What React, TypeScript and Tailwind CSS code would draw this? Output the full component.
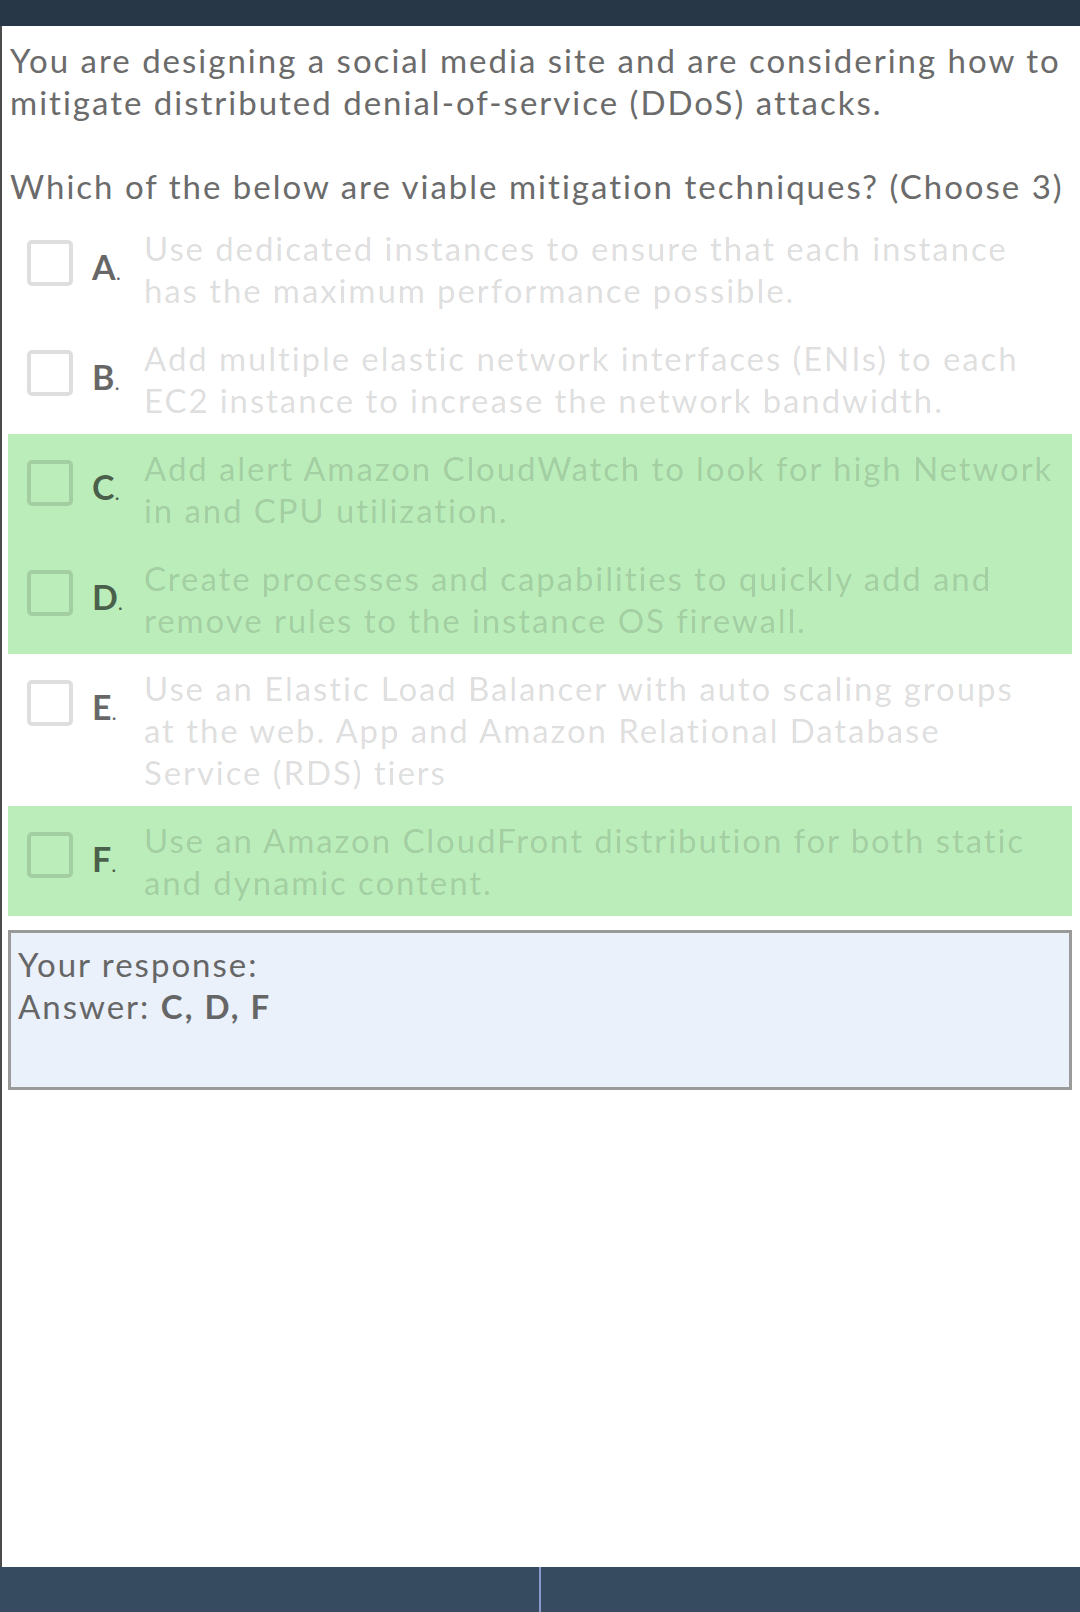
import React from 'react';

interface Option {
  letter: string;
  lines: string[];
  correct: boolean;
}

const options: Option[] = [
  { letter: 'A', lines: ['Use dedicated instances to ensure that each instance', 'has the maximum performance possible.'], correct: false },
  { letter: 'B', lines: ['Add multiple elastic network interfaces (ENIs) to each', 'EC2 instance to increase the network bandwidth.'], correct: false },
  { letter: 'C', lines: ['Add alert Amazon CloudWatch to look for high Network', 'in and CPU utilization.'], correct: true },
  { letter: 'D', lines: ['Create processes and capabilities to quickly add and', 'remove rules to the instance OS firewall.'], correct: true },
  {
    letter: 'E',
    lines: ['Use an Elastic Load Balancer with auto scaling groups', 'at the web. App and Amazon Relational Database', 'Service (RDS) tiers'],
    correct: false,
  },
  { letter: 'F', lines: ['Use an Amazon CloudFront distribution for both static', 'and dynamic content.'], correct: true },
];

const OptionRow: React.FC<{ option: Option }> = ({ option }) => (
  <div className="flex items-start py-[13px]">
    <div className="flex items-center mt-[13px] shrink-0">
      <div className="ml-[19px] w-[46px] h-[46px] rounded-[5px] border-[4px] border-black/[0.13]"></div>
      <div className="ml-[19px] w-[52px] text-[34px] leading-none font-bold text-black/60 pt-[8px]">
        {option.letter}
        <span className="text-[22px] font-normal">.</span>
      </div>
    </div>
    <div className="flex-1 text-[33px] leading-[42px] tracking-[1.9px] text-black/[0.15] whitespace-nowrap">
      {option.lines.map((l) => (
        <div key={l}>{l}</div>
      ))}
    </div>
  </div>
);

const App: React.FC = () => {
  const rows: React.ReactNode[] = [];
  let i = 0;
  while (i < options.length) {
    if (options[i].correct) {
      const group: Option[] = [];
      while (i < options.length && options[i].correct) {
        group.push(options[i]);
        i++;
      }
      rows.push(
        <div key={group[0].letter} className="bg-[#bbedbb]">
          {group.map((o) => (
            <OptionRow key={o.letter} option={o} />
          ))}
        </div>
      );
    } else {
      rows.push(<OptionRow key={options[i].letter} option={options[i]} />);
      i++;
    }
  }

  return (
    <div className="w-[1080px] h-[1612px] flex flex-col bg-white" style={{ fontFamily: 'Lato, "Noto Sans", sans-serif' }}>
      <div className="h-[26px] bg-[#273747] shrink-0"></div>
      <div className="flex-1 border-l-2 border-[#4b4b4b] pl-[6px] pr-[8px]">
        <div className="pt-[13px] pl-[2px] text-[33px] leading-[42px] tracking-[2px] text-[#6b6b6b] whitespace-nowrap">
          <div>You are designing a social media site and are considering how to</div>
          <div>mitigate distributed denial-of-service (DDoS) attacks.</div>
          <div className="h-[42px]"></div>
          <div>Which of the below are viable mitigation techniques? (Choose 3)</div>
        </div>
        <div className="mt-[7px]">{rows}</div>
        <div className="mt-[14px] h-[160px] border-[3px] border-[#9a9a9a] bg-[#eaf1fb] px-[7px] pt-[10px] text-[33px] leading-[42px] tracking-[2px] text-[#666]">
          <div>Your response:</div>
          <div>
            Answer: <span className="font-bold">C, D, F</span>
          </div>
        </div>
      </div>
      <div className="h-[45px] bg-[#364b5f] shrink-0 flex">
        <div className="w-[539px]"></div>
        <div className="w-[2px] bg-[#8b9bd0]"></div>
      </div>
    </div>
  );
};

export default App;
